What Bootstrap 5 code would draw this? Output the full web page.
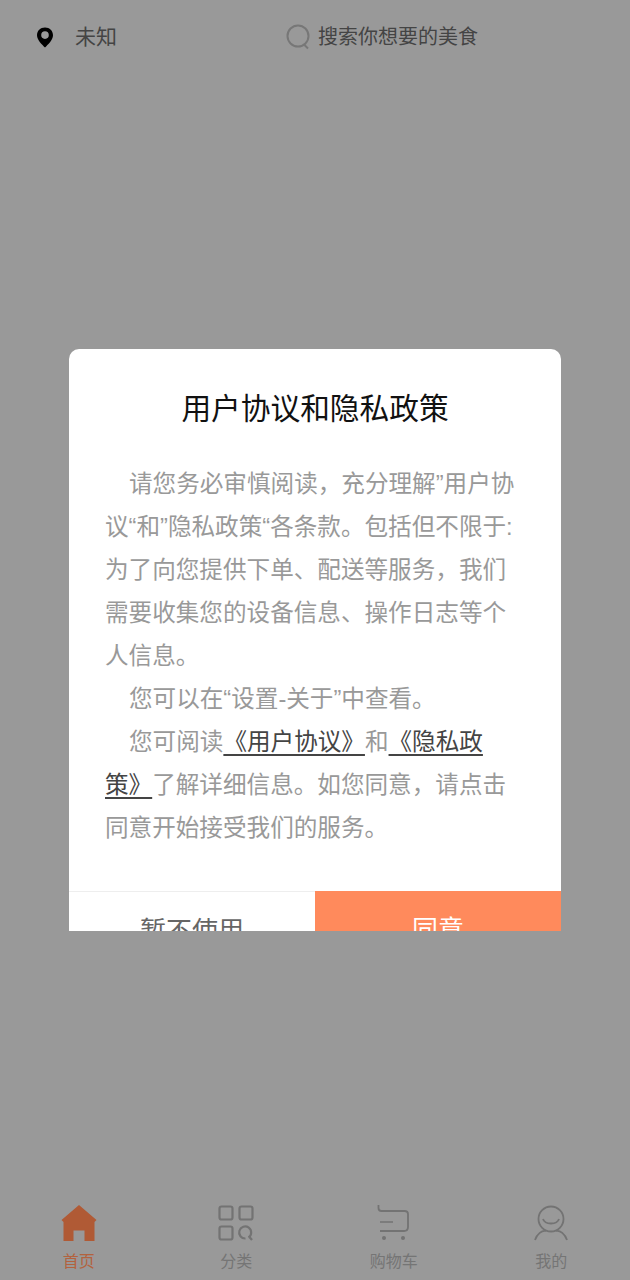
<!DOCTYPE html>
<html lang="zh">
<head>
<meta charset="utf-8">
<title>首页</title>
<link href="https://cdn.jsdelivr.net/npm/bootstrap@5.3.0/dist/css/bootstrap.min.css" rel="stylesheet">
<style>
html,body{height:1280px;overflow:hidden}
body{font-family:"Liberation Sans","Noto Sans CJK SC",sans-serif;background:#999;position:relative}
.top-strip{height:74px;padding-left:36px}
.loc-name{font-size:21px;color:#444;margin-left:21px;width:211px}
.search-hint{font-size:20px;color:#444;margin-left:7px}
.tab-strip{height:75px}
.tab-cell{width:157.5px}
.tab-cell svg{display:block;margin-bottom:11px;flex:none}
.tab-cell span{font-size:16px;line-height:20px;color:#757575}
.tab-cell .on{color:#b3623e}
.dialog-box{width:492px;height:582px;border-radius:10px 10px 0 0;background:#fff;overflow:hidden}
.dialog-title{font-size:29.7px;line-height:40px;color:#111;padding-top:40px;margin:0}
.dialog-text{font-size:23.6px;line-height:43px;color:#999;padding:34px 36px 0;height:462px;box-sizing:border-box}
.dialog-text p{margin:0;text-indent:24px}
.dialog-text a{color:#444;text-decoration:underline;text-underline-offset:4px}
.act-row{height:80px;border-top:1px solid #eee}
.act-btn{width:246px;font-size:26px;line-height:34px;padding-top:22px}
.act-no{color:#666}
.act-yes{background:#ff8a5c;color:#fff;margin-top:-1px}
</style>
</head>
<body>
<div class="d-flex flex-column h-100">
  <div class="top-strip d-flex align-items-center">
    <svg width="18" height="21" viewBox="0 0 18 21"><path fill="#000" fill-rule="evenodd" d="M9 0.5C4.3 0.5 1 3.9 1 8.2c0 5 5.2 9.4 8 12.3 2.8-2.900 8-7.300 8-12.300C17 3.900 13.700 .5 9 .5zM9 4.300a3.800 3.800 0 1 1 0 7.600A3.800 3.800 0 0 1 9 4.300z"/></svg>
    <span class="loc-name">未知</span>
    <svg width="25" height="26" viewBox="0 0 25 26" fill="none" stroke="#777" stroke-width="2"><circle cx="12" cy="12" r="10.500"/><path d="M18.500 21l3.500 3.500"/></svg>
    <span class="search-hint">搜索你想要的美食</span>
  </div>
  <div class="flex-grow-1"></div>
  <div class="tab-strip d-flex">
    <div class="tab-cell d-flex flex-column align-items-center">
      <svg width="36" height="36" viewBox="0 0 36 36"><path fill="#b05a35" d="M18 0L0.500 15 2.500 17v19h10V25.500h11V36h10V17l2-2z"/></svg>
      <span class="on">首页</span>
    </div>
    <div class="tab-cell d-flex flex-column align-items-center">
      <svg width="36" height="36" viewBox="0 0 36 36" fill="none" stroke="#737373" stroke-width="2.200"><rect x="1.500" y="1.500" width="13" height="13" rx="2"/><rect x="21.500" y="1.500" width="13" height="13" rx="2"/><rect x="1.500" y="21.500" width="13" height="13" rx="2"/><path d="M27.500 33.500a6 6 0 1 1 3-1"/><path d="M31.500 32l2.500 3"/></svg>
      <span>分类</span>
    </div>
    <div class="tab-cell d-flex flex-column align-items-center">
      <svg width="36" height="36" viewBox="0 0 36 36" fill="none" stroke="#737373" stroke-width="1.800"><path d="M2.500 0v3c0 2 1 3 3 3h23c3 0 3.500 1 3.500 3v13c0 3-1 4-4 4H4"/><path d="M4 17h13" stroke-width="1.500"/><circle cx="8" cy="33" r="2" fill="#737373" stroke="none"/><circle cx="27" cy="33" r="2" fill="#737373" stroke="none"/></svg>
      <span>购物车</span>
    </div>
    <div class="tab-cell d-flex flex-column align-items-center">
      <svg width="36" height="36" viewBox="0 0 36 36" fill="none" stroke="#737373" stroke-width="1.800"><circle cx="18" cy="14" r="12.500"/><path d="M10 14c2 6 14 6 16 0"/><path d="M2 35c2-6 7-10 11-9M34 35c-2-6-7-10-11-9"/></svg>
      <span>我的</span>
    </div>
  </div>
</div>
<div class="position-absolute top-0 start-0 w-100 h-100 d-flex align-items-center justify-content-center">
  <div class="dialog-box">
    <h1 class="dialog-title text-center fw-normal">用户协议和隐私政策</h1>
    <div class="dialog-text">
      <p>请您务必审慎阅读，充分理解”用户协议“和”隐私政策“各条款。包括但不限于:为了向您提供下单、配送等服务，我们需要收集您的设备信息、操作日志等个人信息。</p>
      <p>您可以在“设置-关于”中查看。</p>
      <p>您可阅读<a href="#">《用户协议》</a>和<a href="#">《隐私政<br>策》</a>了解详细信息。如您同意，请点击同意开始接受我们的服务。</p>
    </div>
    <div class="act-row d-flex">
      <div class="act-btn act-no text-center">暂不使用</div>
      <div class="act-btn act-yes text-center">同意</div>
    </div>
  </div>
</div>
<script src="https://cdn.jsdelivr.net/npm/bootstrap@5.3.0/dist/js/bootstrap.bundle.min.js"></script>
</body>
</html>
